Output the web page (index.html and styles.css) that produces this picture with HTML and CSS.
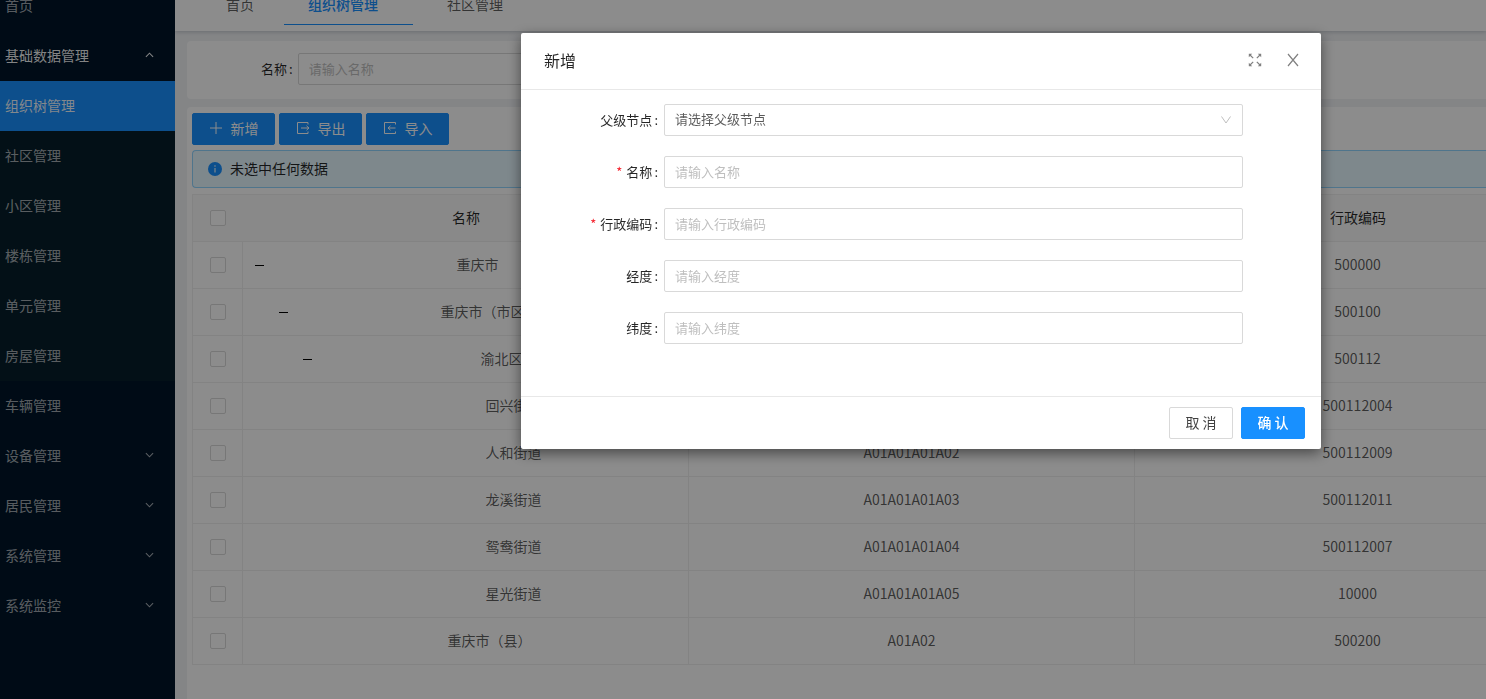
FILE: index.html
```html
<!DOCTYPE html>
<html lang="zh-CN">
<head>
<meta charset="utf-8">
<title>组织树管理</title>
<link rel="stylesheet" href="styles.css">
</head>
<body>
<svg class="sprite" aria-hidden="true">
  <symbol id="up" viewBox="0 0 10 10"><path d="M1 7l4-4 4 4"/></symbol>
  <symbol id="down" viewBox="0 0 10 10"><path d="M1 3l4 4 4-4"/></symbol>
  <symbol id="caret" viewBox="0 0 12 12"><path d="M1.500 2.500L6 9l4.500-6.500"/></symbol>
</svg>
<div class="app">
  <nav class="sidebar">
    <a class="item" href="#">首页</a>
    <a class="item open" href="#">基础数据管理<svg class="arrow"><use href="#up"/></svg></a>
    <div class="submenu">
      <a class="item active" href="#">组织树管理</a>
      <a class="item" href="#">社区管理</a>
      <a class="item" href="#">小区管理</a>
      <a class="item" href="#">楼栋管理</a>
      <a class="item" href="#">单元管理</a>
      <a class="item" href="#">房屋管理</a>
    </div>
    <a class="item" href="#">车辆管理</a>
    <a class="item" href="#">设备管理<svg class="arrow"><use href="#down"/></svg></a>
    <a class="item" href="#">居民管理<svg class="arrow"><use href="#down"/></svg></a>
    <a class="item" href="#">系统管理<svg class="arrow"><use href="#down"/></svg></a>
    <a class="item" href="#">系统监控<svg class="arrow"><use href="#down"/></svg></a>
  </nav>
  <div class="page">
    <header class="tabs">
      <a class="tab home" href="#">首页</a>
      <a class="tab current" href="#">组织树管理</a>
      <a class="tab" href="#">社区管理</a>
    </header>
    <main class="content">
      <form class="card search">
        <label for="q">名称</label>
        <input class="field" id="q" type="text" placeholder="请输入名称">
      </form>
      <section class="card list">
        <div class="toolbar">
          <button class="btn primary" type="button"><svg viewBox="0 0 14 14"><path d="M7 1v12M1 7h12"/></svg>新增</button>
          <button class="btn primary" type="button"><svg viewBox="0 0 14 14"><path d="M12 3.500V1.500H1.500v11H12v-2M5 7h8M10.500 4.800L13 7l-2.500 2.200"/></svg>导出</button>
          <button class="btn primary" type="button"><svg viewBox="0 0 14 14"><path d="M12.500 3.500V1.500H1.500v11h11v-2M12.500 7H5M7.500 4.800L5 7l2.500 2.200"/></svg>导入</button>
        </div>
        <div class="alert"><svg viewBox="0 0 14 14"><circle cx="7" cy="7" r="7" fill="#1890ff"/><path d="M7 6v4.500M7 3.300v1.400" stroke="#e6f7ff" stroke-width="1.200"/></svg><span>未选中任何数据</span></div>
        <table>
          <colgroup><col class="c-check"><col class="c-data"><col class="c-data"><col class="c-data"></colgroup>
          <thead>
            <tr><th class="check"><input type="checkbox" aria-label="全选"></th><th>名称</th><th></th><th>行政编码</th></tr>
          </thead>
          <tbody>
            <tr><td class="check"><input type="checkbox" aria-label="重庆市"></td><td><div class="node"><button class="toggle" type="button" aria-label="收起"></button><span>重庆市</span></div></td><td></td><td>500000</td></tr>
            <tr><td class="check"><input type="checkbox" aria-label="重庆市（市区）"></td><td><div class="node l1"><button class="toggle" type="button" aria-label="收起"></button><span>重庆市（市区）</span></div></td><td></td><td>500100</td></tr>
            <tr><td class="check"><input type="checkbox" aria-label="渝北区"></td><td><div class="node l2"><button class="toggle" type="button" aria-label="收起"></button><span>渝北区</span></div></td><td></td><td>500112</td></tr>
            <tr><td class="check"><input type="checkbox" aria-label="回兴街道"></td><td><div class="node leaf3"><span>回兴街道</span></div></td><td></td><td>500112004</td></tr>
            <tr><td class="check"><input type="checkbox" aria-label="人和街道"></td><td><div class="node leaf3"><span>人和街道</span></div></td><td>A01A01A01A02</td><td>500112009</td></tr>
            <tr><td class="check"><input type="checkbox" aria-label="龙溪街道"></td><td><div class="node leaf3"><span>龙溪街道</span></div></td><td>A01A01A01A03</td><td>500112011</td></tr>
            <tr><td class="check"><input type="checkbox" aria-label="鸳鸯街道"></td><td><div class="node leaf3"><span>鸳鸯街道</span></div></td><td>A01A01A01A04</td><td>500112007</td></tr>
            <tr><td class="check"><input type="checkbox" aria-label="星光街道"></td><td><div class="node leaf3"><span>星光街道</span></div></td><td>A01A01A01A05</td><td>10000</td></tr>
            <tr><td class="check"><input type="checkbox" aria-label="重庆市（县）"></td><td><div class="node leaf1"><span>重庆市（县）</span></div></td><td>A01A02</td><td>500200</td></tr>
          </tbody>
        </table>
      </section>
    </main>
  </div>
</div>

<div class="mask">
  <form class="modal" role="dialog" aria-labelledby="dialog-title">
    <div class="modal-head">
      <h2 id="dialog-title">新增</h2>
      <button class="icon-btn" type="button" aria-label="全屏"><svg viewBox="0 0 14 14"><path d="M5.200 5.200L2 2M8.800 5.200L12 2M5.200 8.800L2 12M8.800 8.800L12 12"/><path class="solid" d="M.8.8h3.400L.8 4.200zM13.200.8v3.400L9.800.8zM.8 13.200V9.800l3.400 3.400zM13.200 13.200H9.800l3.400-3.400z"/></svg></button>
      <button class="icon-btn" type="button" aria-label="关闭"><svg viewBox="0 0 14 14"><path d="M2 1l10 12M12 1L2 13"/></svg></button>
    </div>
    <div class="modal-body">
      <label for="parent">父级节点</label>
      <div class="select">
        <select class="field" id="parent"><option>请选择父级节点</option></select>
        <svg><use href="#caret"/></svg>
      </div>
      <label class="required" for="name">名称</label>
      <input class="field" id="name" type="text" placeholder="请输入名称">
      <label class="required" for="code">行政编码</label>
      <input class="field" id="code" type="text" placeholder="请输入行政编码">
      <label for="lng">经度</label>
      <input class="field" id="lng" type="text" placeholder="请输入经度">
      <label for="lat">纬度</label>
      <input class="field" id="lat" type="text" placeholder="请输入纬度">
    </div>
    <div class="modal-foot">
      <button class="btn" type="button">取 消</button>
      <button class="btn primary" type="button">确 认</button>
    </div>
  </form>
</div>
</body>
</html>
```
FILE: styles.css
```css
* { box-sizing: border-box; }

body {
  margin: 0;
  overflow: hidden;
  font: 14px/22px "Noto Sans CJK SC", sans-serif;
  color: rgba(0, 0, 0, .65);
  background: #f0f2f5;
}

a { color: inherit; text-decoration: none; }
button, input, select { font: inherit; }
svg { fill: none; stroke: currentColor; }
.sprite { display: none; }

.app { display: flex; height: 100vh; overflow: hidden; }

/* sidebar */
.sidebar {
  flex: none;
  width: 175px;
  background: #001529;
  color: rgba(255, 255, 255, .65);
}
.sidebar > .item:first-child { margin-top: -19px; }
.item {
  display: flex;
  align-items: center;
  justify-content: space-between;
  height: 50px;
  padding: 0 21px 2px 5px;
}
.submenu { background: #071e2b; }
.item.open { color: rgba(255, 255, 255, .95); }
.item.active { background: #1890ff; color: rgba(255, 255, 255, .95); }
.arrow { width: 9px; height: 10px; stroke-width: 1.2px; }

/* page */
.page { flex: 1; min-width: 0; }
.tabs {
  display: flex;
  gap: 10px;
  height: 46px;
  margin-top: -15px;
  padding-left: 27px;
  background: #fff;
  box-shadow: 0 1px 4px rgba(0, 21, 41, .2);
}
.tab { height: 40px; padding: 0 35px 0 24px; line-height: 38px; }
.tab.home { padding-right: 20px; }
.tab.current {
  color: #1890ff;
  font-weight: 500;
  border-bottom: 1px solid #1890ff;
}
.content {
  display: flex;
  flex-direction: column;
  gap: 8px;
  padding: 10px 0 0 12px;
}
.card { background: #fff; border-radius: 4px 0 0 4px; }
.search {
  display: flex;
  align-items: center;
  gap: 5px;
  height: 58px;
  padding: 0 0 2px 74px;
  font-size: 13px;
  color: rgba(0, 0, 0, .85);
}
.search .field { width: 300px; }
label::after { content: ":"; margin-left: 2px; }
.list { height: 600px; padding: 6px 0 0 5px; overflow: hidden; }
.toolbar { display: flex; gap: 4px; }
.toolbar .btn { width: 83px; }
.toolbar svg { width: 14px; height: 14px; }
.alert {
  display: flex;
  align-items: center;
  gap: 8px;
  height: 38px;
  margin: 5px 0 6px;
  padding-left: 15px;
  border: 1px solid #91d5ff;
  border-right: 0;
  border-radius: 4px 0 0 4px;
  background: #e6f7ff;
  color: rgba(0, 0, 0, .85);
}
.alert svg { width: 14px; height: 14px; stroke: none; }
.alert span { padding-bottom: 2px; }

/* table */
table {
  table-layout: fixed;
  width: 1389px;
  border-collapse: separate;
  border-spacing: 0;
  border-top: 1px solid #efefef;
  border-left: 1px solid #efefef;
}
.c-check { width: 50px; }
.c-data { width: 446px; }
th, td {
  height: 47px;
  padding: 0 4px 2px;
  text-align: center;
  border-bottom: 1px solid #efefef;
}
th { background: #fafafa; color: rgba(0, 0, 0, .85); font-weight: 400; }
td { border-right: 1px solid #efefef; }
th.check, td.check { padding-bottom: 0; }
input[type="checkbox"] {
  appearance: none;
  display: block;
  width: 16px;
  height: 16px;
  margin: 0 auto;
  border: 1px solid #d9d9d9;
  border-radius: 2px;
  background: #fff;
}
.node { display: flex; align-items: center; }
.node span { flex: 1; }
.l1 { padding-left: 24px; }
.l2, .leaf1 { padding-left: 48px; }
.leaf3 { padding-left: 96px; }
.toggle {
  display: grid;
  place-items: center;
  width: 24px;
  height: 22px;
  padding: 2px 0 0;
  border: 0;
  background: none;
}
.toggle::before { content: ""; width: 9px; height: 1px; background: #000; }

/* controls */
.btn {
  display: flex;
  align-items: center;
  justify-content: center;
  gap: 8px;
  height: 32px;
  padding: 0 0 2px;
  border: 1px solid #d9d9d9;
  border-radius: 2px;
  background: #fff;
  color: rgba(0, 0, 0, .75);
}
.btn.primary { border-color: #1890ff; background: #1890ff; color: #fff; }
.field {
  width: 100%;
  height: 32px;
  padding: 0 11px 2px 10px;
  border: 1px solid #d9d9d9;
  border-radius: 2px;
  background: #fff;
  color: rgba(0, 0, 0, .65);
  font-size: 13px;
}
.field::placeholder { color: #bfbfbf; }

/* dialog */
.mask {
  position: fixed;
  inset: 0;
  display: flex;
  justify-content: flex-end;
  align-items: flex-start;
  padding: 33px 165px 0 0;
  background: rgba(0, 0, 0, .45);
}
.modal {
  width: 800px;
  background: #fff;
  border-radius: 2px;
  box-shadow: 0 4px 14px rgba(0, 0, 0, .5);
}
.modal-head {
  display: flex;
  align-items: center;
  gap: 14px;
  height: 57px;
  padding: 0 16px 2px 23px;
  border-bottom: 1px solid #e8e8e8;
}
.modal-head h2 {
  flex: 1;
  margin: 0;
  font-size: 16px;
  font-weight: 400;
  color: rgba(0, 0, 0, .85);
}
.icon-btn {
  display: grid;
  place-items: center;
  width: 24px;
  height: 24px;
  padding: 0;
  border: 0;
  background: none;
  color: #808080;
}
.icon-btn svg { width: 14px; height: 14px; stroke-width: 1.2px; }
.solid { fill: currentColor; stroke: none; }
.modal-body {
  display: grid;
  grid-template-columns: 137px 1fr;
  gap: 20px 6px;
  align-items: center;
  padding: 14px 78px 52px 0;
}
.modal-body label {
  padding-bottom: 1px;
  text-align: right;
  font-size: 13px;
  color: rgba(0, 0, 0, .85);
}
.required::before { content: "*"; margin-right: 4px; color: #f5222d; }
.select { display: grid; align-items: center; }
.select > * { grid-area: 1 / 1; }
.select select { appearance: none; }
.select svg {
  justify-self: end;
  width: 12px;
  height: 12px;
  margin-right: 11px;
  color: #bfbfbf;
  pointer-events: none;
}
.modal-foot {
  display: flex;
  justify-content: flex-end;
  gap: 8px;
  padding: 10px 16px;
  border-top: 1px solid #e8e8e8;
}
.modal-foot .btn { width: 64px; }
.modal-foot .primary { font-weight: 500; }
```
